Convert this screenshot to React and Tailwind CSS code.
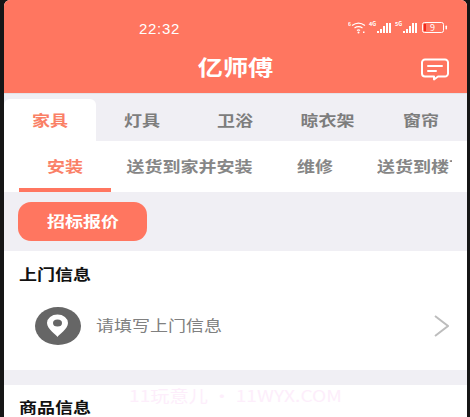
const cjk = { fontFamily: '"Noto Sans CJK SC", "Noto Sans", sans-serif' }

const categories = [
  { label: '灯具', width: 'w-[92px]' },
  { label: '卫浴', width: 'w-[94px]' },
  { label: '晾衣架', width: 'w-[91px]' },
  { label: '窗帘', width: 'w-[96px]' },
]
const services = [
  { label: '送货到家并安装', width: 'w-[158px]' },
  { label: '维修', width: 'w-[92px]' },
]

// the screenshot is stretched sideways, so the glyphs are wider than they are tall
function Wide({ children, left }) {
  return (
    <span className={`inline-block whitespace-nowrap scale-x-[1.2] ${left ? 'origin-left' : ''}`}>
      {children}
    </span>
  )
}

function StatusIcons() {
  return (
    <svg width="100" height="14" viewBox="0 0 100 14" fill="none" className="text-white">
      {/* wifi */}
      <text x="0" y="6" fontSize="5" fill="currentColor" fontWeight="700">6</text>
      <path d="M4 5.500C8 2.500 13 2.500 17 5.500M6.500 8C9 6.300 12 6.300 14.500 8M9 10.500C10 9.800 11 9.800 12 10.500" stroke="currentColor" strokeWidth="1.200" />
      <circle cx="10.500" cy="12.500" r="1" fill="currentColor" />
      <rect x="15" y="11.500" width="1.500" height="1.500" fill="currentColor" />
      {/* 4G */}
      <text x="21" y="6" fontSize="5.500" fill="currentColor" fontWeight="700">4G</text>
      <path d="M29 11h2v2h-2zM32 9h2v4h-2zM35 6h2v7h-2zM38 3h2v10h-2zM41 3h2v10h-2z" fill="currentColor" />
      {/* 5G */}
      <text x="47" y="6" fontSize="5.500" fill="currentColor" fontWeight="700">5G</text>
      <path d="M55 11h2v2h-2zM58 9h2v4h-2zM61 6h2v7h-2zM64 3h2v10h-2zM67 3h2v10h-2z" fill="currentColor" />
      {/* battery */}
      <rect x="74.500" y="2.500" width="21" height="10" rx="2" stroke="currentColor" strokeWidth="1" />
      <rect x="76" y="4" width="2" height="7" fill="#f02a1e" />
      <text x="82" y="11" fontSize="9" fill="currentColor">9</text>
      <rect x="97.500" y="5.500" width="1.500" height="4" rx="0.700" fill="currentColor" />
    </svg>
  )
}

function MessageIcon() {
  return (
    <svg width="30" height="23" viewBox="0 0 30 23" fill="none" stroke="white" strokeWidth="2" strokeLinecap="round" strokeLinejoin="round">
      <path d="M5 1.500h20a3 3 0 0 1 3 3v11a3 3 0 0 1-3 3h-7l-4 3v-3H5a3 3 0 0 1-3-3v-11a3 3 0 0 1 3-3z" />
      <path d="M8 8h14M8 13h8" />
    </svg>
  )
}

function PinBadge() {
  return (
    <svg width="46" height="38" viewBox="0 0 46 38">
      <ellipse cx="23" cy="19" rx="23" ry="19" fill="#666666" />
      <path d="M22.500 30c-1-2-10.500-8-10.500-14a10.500 8.500 0 0 1 21 0c0 6-9.500 12-10.500 14z" fill="white" />
      <ellipse cx="22.500" cy="16" rx="4.500" ry="3.500" fill="#666666" />
    </svg>
  )
}

function Chevron() {
  return (
    <svg width="15" height="22" viewBox="0 0 15 22" fill="none" stroke="#bdbdbd" strokeWidth="2">
      <path d="M1 1l13 10L1 21" />
    </svg>
  )
}

export default function App() {
  return (
    <div className="w-[470px] h-[417px] overflow-hidden bg-[#161616] pl-[4px] pr-[3px]" style={cjk}>
      <div className="h-full overflow-hidden rounded-t-[6px] bg-white">
        {/* header */}
        <div className="h-[93px] bg-[#ff7660] flex flex-col">
          <div className="h-[39px] pt-[18px] flex items-center">
            <span className="ml-[135px] text-[15px] leading-[20px] tracking-[0.7px] text-white" style={{ fontFamily: '"Liberation Sans", sans-serif' }}>22:32</span>
            <div className="ml-auto mr-[19px] mb-[3px]">
              <StatusIcons />
            </div>
          </div>
          <div className="flex-1 flex items-center relative">
            <span className="mx-auto text-[21px] font-bold text-white leading-none">
              <Wide>亿师傅</Wide>
            </span>
            <div className="absolute right-[17px] top-[19px]">
              <MessageIcon />
            </div>
          </div>
        </div>

        {/* category tabs */}
        <div className="h-[48px] border-t border-[#e4e3e8] bg-[#f0eff4] flex items-end">
          <div className="w-[92px] h-[42px] shrink-0 bg-white rounded-t-[6px] flex items-center justify-center text-[15px] font-bold text-[#fa8066] pt-[1px]">
            <Wide>家具</Wide>
          </div>
          {categories.map((c) => (
            <div key={c.label} className={`h-[42px] shrink-0 flex items-center justify-center text-[15px] font-bold text-[#7d7d7d] pt-[1px] ${c.width}`}>
              <Wide>{c.label}</Wide>
            </div>
          ))}
        </div>

        {/* service tabs */}
        <div className="h-[51px] bg-white flex overflow-hidden whitespace-nowrap">
          <div className="ml-[15px] w-[92px] shrink-0 flex flex-col">
            <div className="flex-1 flex items-center justify-center text-[15px] font-bold text-[#fa8066] pt-[3px]">
              <Wide>安装</Wide>
            </div>
            <div className="h-[4px] bg-[#ff7660]"></div>
          </div>
          {services.map((s) => (
            <div key={s.label} className={`shrink-0 flex items-center justify-center text-[15px] font-bold text-[#868686] ${s.width}`}>
              <Wide>{s.label}</Wide>
            </div>
          ))}
          <div className="w-[91px] shrink-0 overflow-hidden flex items-center pl-[16px] text-[15px] font-bold text-[#868686]">
            <Wide left>送货到楼下</Wide>
          </div>
        </div>

        {/* tender button */}
        <div className="h-[59px] bg-[#f0eff4] pt-[10px] pl-[14px]">
          <button className="w-[129px] h-[39px] rounded-[13px] bg-[#ff7660] text-white text-[15px] font-bold pl-[1px]">
            <Wide>招标报价</Wide>
          </button>
        </div>

        {/* visit info */}
        <div className="h-[119px] bg-white px-[15px] pt-[13px]">
          <div className="text-[15px] font-bold leading-[20px] text-[#111111]">
            <Wide left>上门信息</Wide>
          </div>
          <div className="flex items-center mt-[23px] ml-[16px]">
            <PinBadge />
            <span className="ml-[15px] text-[15px] leading-[20px] text-[#808080] -translate-y-[1px]">
              <Wide left>请填写上门信息</Wide>
            </span>
            <div className="ml-auto mr-[3px]">
              <Chevron />
            </div>
          </div>
        </div>

        <div className="h-[15px] bg-[#f0eff4]"></div>

        {/* product info */}
        <div className="bg-white px-[15px] pt-[12px] relative">
          <div className="text-[15px] font-bold leading-[20px] text-[#111111]">
            <Wide left>商品信息</Wide>
          </div>
          <div className="absolute left-[125px] top-0 text-[16px] leading-[20px] text-[#fdeefb]">
            <Wide left>11玩意儿 • 11WYX.COM</Wide>
          </div>
        </div>
      </div>
    </div>
  )
}
